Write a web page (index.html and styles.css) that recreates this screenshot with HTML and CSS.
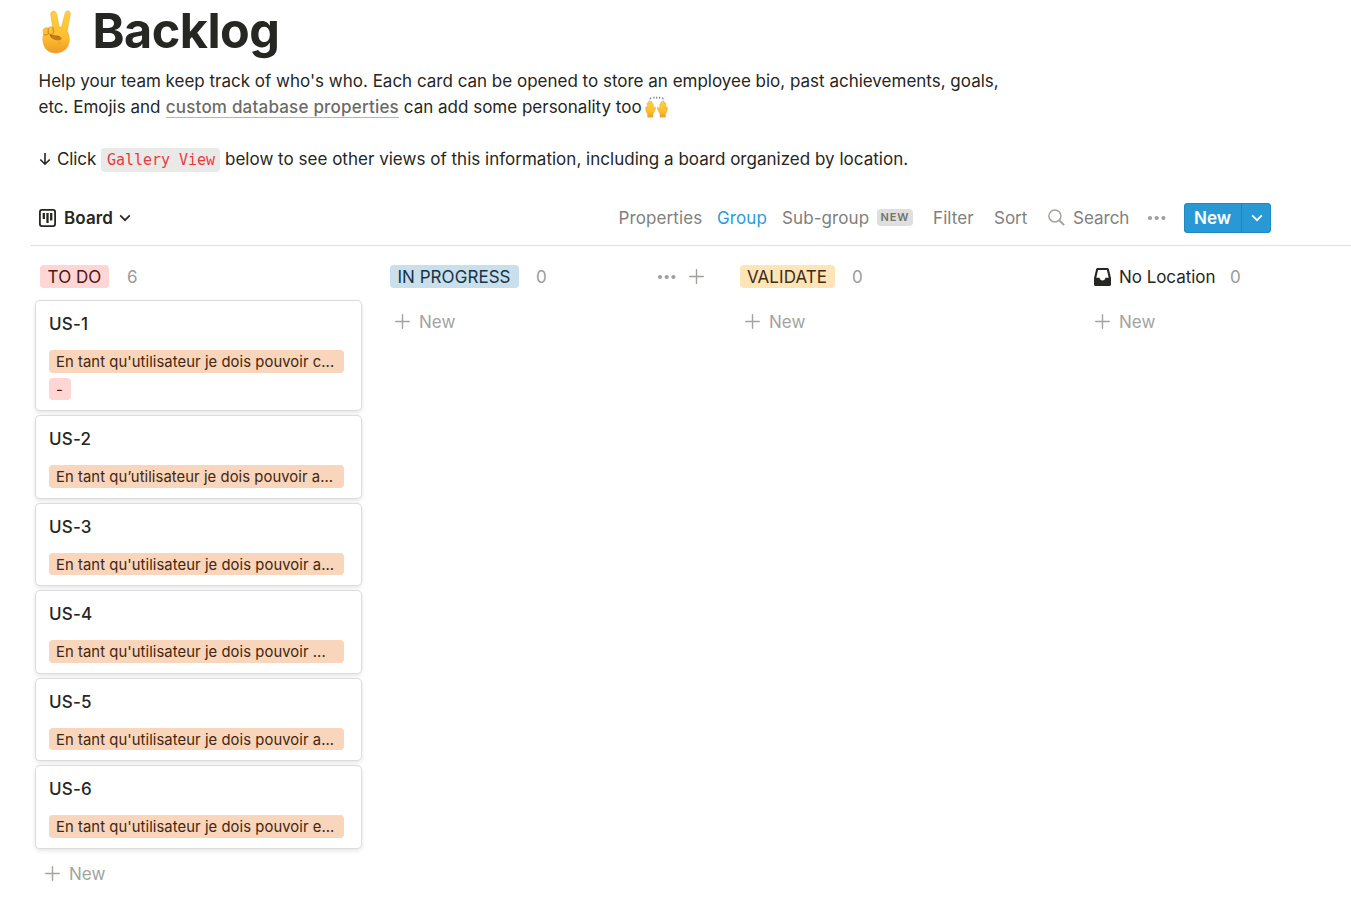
FILE: index.html
```html
<!DOCTYPE html>
<html lang="en">
<head>
<meta charset="utf-8">
<title>Backlog</title>
<link rel="stylesheet" href="styles.css">
</head>
<body>
<svg class="defs" width="0" height="0" aria-hidden="true">
  <defs>
    <linearGradient id="skin" x1="0" y1="0" x2="0" y2="1"><stop offset="0" stop-color="#ffd03f"/><stop offset=".65" stop-color="#fdbd2e"/><stop offset="1" stop-color="#ee9a26"/></linearGradient>
    <symbol id="plus" viewBox="0 0 16 16"><path d="M8 .8v14.400M.8 8h14.400" fill="none" stroke="currentColor" stroke-width="1.500" stroke-linecap="round"/></symbol>
    <symbol id="dots" viewBox="0 0 20 6"><circle cx="3" cy="3" r="2.100" fill="currentColor"/><circle cx="9.700" cy="3" r="2.100" fill="currentColor"/><circle cx="16.400" cy="3" r="2.100" fill="currentColor"/></symbol>
    <symbol id="chevron" viewBox="0 0 12 8"><path d="M1.200 1.400 6 6.200l4.800-4.800" fill="none" stroke="currentColor" stroke-width="1.700"/></symbol>
    <symbol id="hand" viewBox="0 0 11 18"><path d="M2.600 18v-3.500C1.200 13 .6 10.500.6 8.200c0-1 1-1.200 1.300-.3l.5.800L2.200 4c0-1 1.100-1 1.300 0L3.800 2c.1-1 1.300-1 1.400 0l.1.500c.3-.8 1.500-.7 1.500.3l.2 1.400c.4-.6 1.200-.3 1.200.5l.2 4.500 1.400-1.300c1-.6 1.300.3.9 1.200L8 14.500V18z" fill="url(#skin)" stroke="#eda52d" stroke-width=".5"/></symbol>
  </defs>
</svg>

<header class="page-head">
  <div class="title-row">
    <svg class="victory" viewBox="0 0 30 44" role="img" aria-label="Victory hand">
      <path d="M10.800 1.200c-1.600.4-2.300 1.700-2 3.500L10.600 17c-1.600-.7-3.300-.3-4.200 1C3.500 17 1 18.200 1 21c0 1.500.2 2.800.6 4C.6 26.500.8 28 .9 30.500c.4 8 5.600 12.500 12.700 12.500 8.300 0 13.800-5.400 13.800-13.400 0-3.600-.9-6.200-2.300-8.400l3.200-16.700c.3-1.900-.6-3.200-2-3.500-1.700-.3-2.900.6-3.300 2.700L19.500 17h-2.300L14.400 3.500c-.4-1.800-1.800-2.700-3.600-2.300z" fill="url(#skin)" stroke="#e6a02c" stroke-width=".5"/>
      <path d="M1.700 24.300c1.300 1 4 .7 4.500-.8v-5.300M6.200 23.500c1.200 1.300 4.600 1 5.400-.7l-.8-5.600" fill="none" stroke="#c98220" stroke-width="1"/>
      <path d="M7.500 25c3.500 2.300 9 .8 11.300 2.300 1.800 1.300.2 3.100-2.800 3-3.500-.1-7-1.500-8.500-5.300z" fill="#c17b1e"/>
      <path d="M8 25.200c3.200 1 6.500.4 9.500 1.500" fill="none" stroke="#925815" stroke-width=".9"/>
      <path d="M15.500 30.400c1.300.8 2.200 1.900 2.500 3.200" fill="none" stroke="#e09a2c" stroke-width=".9" stroke-linecap="round"/>
    </svg>
    <h1 class="title">Backlog</h1>
  </div>
  <div class="intro">
    <p class="line"><span class="l1">Help your team keep track of who's who. Each card can be opened to store an employee bio, past achievements, goals,</span></p>
    <p class="line"><span class="l2">etc. Emojis and <a class="link">custom database properties</a> can add some personality too</span><svg class="hands" viewBox="0 0 24 22" role="img" aria-label="Raising hands"><use href="#hand" x="0" y="3.500" width="11" height="18"/><use href="#hand" x="0" y="3.500" width="11" height="18" transform="matrix(-1 0 0 1 23 0)"/><path d="m5 3.200.8-1.700M9 2.500 8.800.8m2.900 1.700V.8m2.800 1.700.2-1.700M18.200 3.200l-.8-1.700" stroke="#777b80" stroke-width="1.200"/></svg></p>
    <p class="line blank"></p>
    <p class="line"><svg class="down" viewBox="0 0 12 14"><path d="M6 1v11M1.300 7.500 6 12.200l4.700-4.700" fill="none" stroke="currentColor" stroke-width="1.600"/></svg><span class="click">Click</span><code class="code">Gallery View</code><span class="l3">below to see other views of this information, including a board organized by location.</span></p>
  </div>
</header>

<nav class="toolbar">
  <div class="view">
    <svg class="board-icon" viewBox="0 0 18 18"><rect x=".9" y=".9" width="15.200" height="16.200" rx="2" fill="none" stroke="currentColor" stroke-width="1.800"/><path d="M4.800 4v6M8.500 4v10M12.200 4v7.500" stroke="currentColor" stroke-width="2.300"/></svg>
    <span class="view-name">Board</span>
    <svg class="view-chevron"><use href="#chevron"/></svg>
  </div>
  <div class="tools">
    <span class="tool properties">Properties</span>
    <span class="tool group">Group</span>
    <span class="tool subgroup">Sub-group</span>
    <span class="badge">NEW</span>
    <span class="tool filter">Filter</span>
    <span class="tool sort">Sort</span>
    <svg class="search-icon" viewBox="0 0 17 17"><circle cx="6.900" cy="6.900" r="6" fill="none" stroke="currentColor" stroke-width="1.500"/><path d="m11.200 11.200 4.900 4.900" stroke="currentColor" stroke-width="2"/></svg>
    <span class="tool search">Search</span>
    <svg class="more"><use href="#dots"/></svg>
    <div class="new-button"><span class="new-main">New</span><span class="new-drop"><svg class="drop-chevron"><use href="#chevron"/></svg></span></div>
  </div>
</nav>

<main class="board">
  <section class="column">
    <div class="col-head"><span class="tag red todo">TO DO</span><span class="count">6</span></div>
    <div class="cards">
      <article class="card tall"><h2 class="card-title">US-1</h2><span class="pill">En tant qu'utilisateur je dois pouvoir c...</span><span class="pill dash">-</span></article>
      <article class="card"><h2 class="card-title">US-2</h2><span class="pill">En tant qu’utilisateur je dois pouvoir a...</span></article>
      <article class="card"><h2 class="card-title">US-3</h2><span class="pill">En tant qu'utilisateur je dois pouvoir a...</span></article>
      <article class="card"><h2 class="card-title">US-4</h2><span class="pill">En tant qu'utilisateur je dois pouvoir ...</span></article>
      <article class="card"><h2 class="card-title">US-5</h2><span class="pill">En tant qu'utilisateur je dois pouvoir a...</span></article>
      <article class="card"><h2 class="card-title">US-6</h2><span class="pill">En tant qu'utilisateur je dois pouvoir e...</span></article>
    </div>
    <div class="add"><svg class="plus"><use href="#plus"/></svg><span>New</span></div>
  </section>
  <section class="column">
    <div class="col-head"><span class="tag blue progress">IN PROGRESS</span><span class="count">0</span><span class="col-actions"><svg class="more"><use href="#dots"/></svg><svg class="plus"><use href="#plus"/></svg></span></div>
    <div class="add"><svg class="plus"><use href="#plus"/></svg><span>New</span></div>
  </section>
  <section class="column">
    <div class="col-head"><span class="tag yellow validate">VALIDATE</span><span class="count">0</span></div>
    <div class="add"><svg class="plus"><use href="#plus"/></svg><span>New</span></div>
  </section>
  <section class="column">
    <div class="col-head"><svg class="inbox" viewBox="0 0 17 18"><path fill-rule="evenodd" d="M3.600 0h9.800c.7 0 1.200.4 1.400 1.100L17 10v6.600c0 .8-.6 1.400-1.400 1.400H1.400C.6 18 0 17.400 0 16.600V10L2.200 1.100C2.400.4 2.900 0 3.600 0zm.5 1.900L2.300 9.800h3.300c.2 1.800 1.400 2.800 2.900 2.800s2.700-1 2.900-2.800h3.300l-1.800-7.900z" fill="currentColor"/></svg><span class="no-location">No Location</span><span class="count">0</span></div>
    <div class="add"><svg class="plus"><use href="#plus"/></svg><span>New</span></div>
  </section>
</main>
</body>
</html>
```
FILE: styles.css
```css
* { box-sizing: border-box; }
body { margin: 0; width: 1351px; height: 922px; overflow: hidden; background: #fff; color: #262622; font: 17px/26px Inter, "Liberation Sans", sans-serif; white-space: nowrap; }
svg { display: block; flex: none; }
h1, h2, p { margin: 0; }
.defs { position: absolute; }

.page-head { height: 190px; padding: 0 38px; }
.title-row { display: flex; height: 68px; padding-left: 4px; }
.victory { width: 30px; height: 44px; margin-top: 10px; }
.title { margin: 1px 0 0 20.500px; font-size: 48.500px; line-height: 60px; font-weight: 700; letter-spacing: -0.5px; }
.line { display: flex; align-items: center; height: 26px; }
.l1, .l2 { padding-left: 0.5px; }
.l1 { letter-spacing: -0.005px; }
.l3 { letter-spacing: 0.015px; }
.click { width: 44px; letter-spacing: -0.1px; }
.link { margin-left: 0.5px; color: #6b6b67; font-weight: 500; letter-spacing: 0.2px; border-bottom: 1px solid #b5b5b3; }
.hands { width: 24px; height: 22px; margin-left: 3px; }
.down { width: 12px; height: 14px; margin: 0 6px 0 1px; }
.code { width: 119px; height: 24px; margin: 2px 5px 0 0; padding-left: 1px; border-radius: 4px; background: #e9e9e7; color: #eb3941; font: 15px/24px "DejaVu Sans Mono", monospace; letter-spacing: -0.04px; text-align: center; }

.toolbar { display: flex; justify-content: space-between; align-items: center; height: 56px; margin-left: 30px; padding: 0 80px 0 9px; border-bottom: 1px solid #e2e2e0; }
.view { display: flex; align-items: center; }
.board-icon { width: 18px; height: 18px; }
.view-name { width: 55px; margin-left: 7px; font-weight: 600; letter-spacing: 0.1px; }
.view-chevron { width: 12px; height: 8px; }
.tools { display: flex; align-items: center; color: #80807c; }
.properties { width: 99px; padding-left: 0.5px; letter-spacing: 0.1px; }
.group { width: 65px; color: #2b9bd7; letter-spacing: 0.1px; }
.subgroup { width: 95px; letter-spacing: 0.1px; }
.badge { width: 36px; height: 17px; margin-right: 20px; border-radius: 4px; background: #dfdfdd; color: #73736f; font-size: 11px; line-height: 17px; font-weight: 600; letter-spacing: 0.9px; text-align: center; }
.filter { width: 61px; letter-spacing: 0.1px; }
.sort { width: 54px; }
.search-icon { width: 17px; height: 17px; margin-right: 8px; color: #a3a3a0; }
.search { width: 74px; }
.more { width: 20px; height: 6px; color: #9f9f9c; }
.new-button { display: flex; width: 87px; height: 30px; margin-left: 17px; border-radius: 4px; background: #2899d5; color: #fff; box-shadow: inset 0 0 0 1px #2288bf; line-height: 30px; }
.new-main { width: 58px; border-right: 1px solid #2283b8; font-weight: 600; text-align: center; }
.new-drop { display: flex; flex: 1; align-items: center; justify-content: center; }
.drop-chevron { width: 12px; height: 8px; }

.board { display: grid; grid-template-columns: repeat(4, 350px); padding: 17px 0 0 40px; }
.column { width: 322px; }
.col-head { display: flex; align-items: center; height: 28px; }
.tag { height: 23px; margin-bottom: 1px; border-radius: 4px; line-height: 24px; text-align: center; letter-spacing: 0.05px; }
.red { background: #ffd6d3; color: #4c1417; }
.blue { background: #c9dfeb; color: #183347; }
.yellow { background: #fde5b8; color: #402c1b; }
.todo { width: 69px; }
.progress { width: 129px; padding-right: 1px; }
.validate { width: 95px; padding-right: 1px; }
.count { margin-left: 17px; color: #9c9c99; }
.todo + .count { margin-left: 18px; }
.col-actions { display: flex; align-items: center; gap: 12px; margin-left: auto; padding: 0 8px 1px 0; color: #9f9f9c; }
.inbox { width: 17px; height: 18px; margin-left: 4px; }
.no-location { width: 96px; margin-left: 8px; letter-spacing: -0.05px; }
.column:last-child .count { margin-left: 15px; }
.cards { display: grid; gap: 6px; width: 325px; margin: 10px 0 -7px -4px; }
.card { display: flex; flex-direction: column; gap: 5px; height: 81.500px; padding: 10px 17px 0 13px; border-radius: 4px; background: #fff; box-shadow: 0 0 0 1px #dcdcdb, 0 2px 4px 1px #0000001a; }
.tall { height: 109px; }
.card-title { height: 26px; margin-bottom: 8px; font-size: 17px; line-height: 26px; font-weight: 500; letter-spacing: 0.2px; }
.pill { flex: none; width: 295px; height: 22.500px; padding-left: 7px; border-radius: 4px; background: #f8d5bb; color: #45260f; font-size: 14.800px; line-height: 25px; letter-spacing: 0.07px; }
.dash { width: 22px; background: #ffd6d3; color: #4c1417; }
.add { display: flex; align-items: center; height: 26px; margin-top: 18px; padding-left: 5px; gap: 9px; color: #a3a3a0; }
.plus { width: 15px; height: 15px; }
.add .plus { margin-bottom: 1px; }
.cards + .add { margin-top: 20px; }
```
